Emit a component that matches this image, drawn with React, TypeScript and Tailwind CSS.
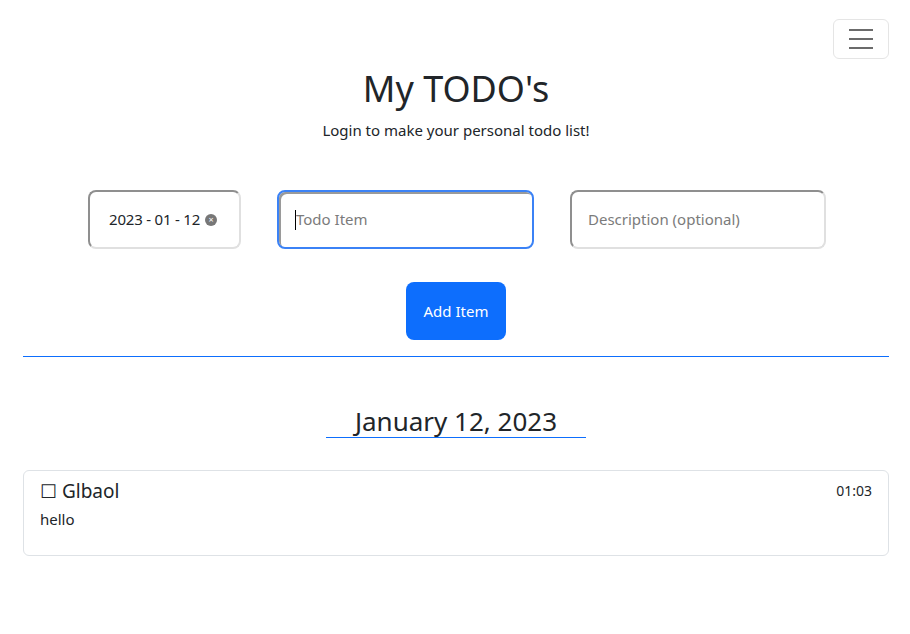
import React from 'react'

export default function App() {
  return (
    <div className="min-h-[634px] bg-white text-[#212529]" style={{ fontFamily: '"Noto Sans", sans-serif' }}>
      <div className="pl-[23px] pr-[21px]">
        {/* Top nav */}
        <div className="flex justify-end pt-[19px]">
          <button className="flex h-[40px] w-[56px] flex-col items-center justify-center gap-[7px] rounded-[6px] border border-[#e5e5e5]">
            <span className="block h-[2px] w-[24px] bg-[#6b6b6b]" />
            <span className="block h-[2px] w-[24px] bg-[#6b6b6b]" />
            <span className="block h-[2px] w-[24px] bg-[#6b6b6b]" />
          </button>
        </div>

        {/* Header */}
        <div className="mt-[8px] text-center">
          <h1 className="text-[36px] leading-[44px]">My TODO's</h1>
          <p className="mt-[7px] text-[15px] leading-[24px]">Login to make your personal todo list!</p>
        </div>

        {/* Form */}
        <div className="mt-[48px] flex justify-center gap-[36px] pl-[2px]">
          <div className="flex h-[59px] w-[153px] items-center rounded-[8px] border-2 border-t-[#8f8f8f] border-l-[#8f8f8f] border-r-[#e0e0e0] border-b-[#e0e0e0] pl-[19px]">
            <span className="text-[15px] tracking-[-0.2px]">2023 - 01 - 12</span>
            <span className="ml-[5px] flex h-[12px] w-[12px] items-center justify-center rounded-full bg-[#777] text-[9px] leading-none text-white">×</span>
          </div>
          <div className="flex h-[59px] w-[257px] items-center rounded-[8px] border-2 border-[#3b82f6] pl-[16px] shadow-[inset_2px_2px_0_#9a9a9a]">
            <span className="h-[20px] w-px bg-black" />
            <span className="text-[15px] text-[#7b7b7b]">Todo Item</span>
          </div>
          <div className="flex h-[59px] w-[256px] items-center rounded-[8px] border-2 border-t-[#8f8f8f] border-l-[#8f8f8f] border-r-[#e0e0e0] border-b-[#e0e0e0] pl-[16px]">
            <span className="text-[15px] text-[#7b7b7b]">Description (optional)</span>
          </div>
        </div>

        <div className="mt-[33px] flex justify-center">
          <button className="h-[58px] w-[100px] rounded-[8px] bg-[#0d6efd] text-[15px] text-white">Add Item</button>
        </div>

        <div className="mt-[16px] h-px bg-[#0d6efd]" />

        {/* Day */}
        <div className="mt-[48px] flex justify-center">
          <div className="w-[260px] border-b border-[#0d6efd] text-center text-[26px] leading-[32px]">January 12, 2023</div>
        </div>

        <div className="mt-[32px] flex h-[86px] rounded-[6px] border border-[#dee2e6] px-[16px] pt-[7px]">
          <div className="flex-1">
            <div className="text-[19px] leading-[26px]">☐ Glbaol</div>
            <div className="mt-[3px] text-[15px] leading-[24px]">hello</div>
          </div>
          <div className="pt-[3px] text-[14px] leading-[20px]">01:03</div>
        </div>
      </div>
    </div>
  )
}
